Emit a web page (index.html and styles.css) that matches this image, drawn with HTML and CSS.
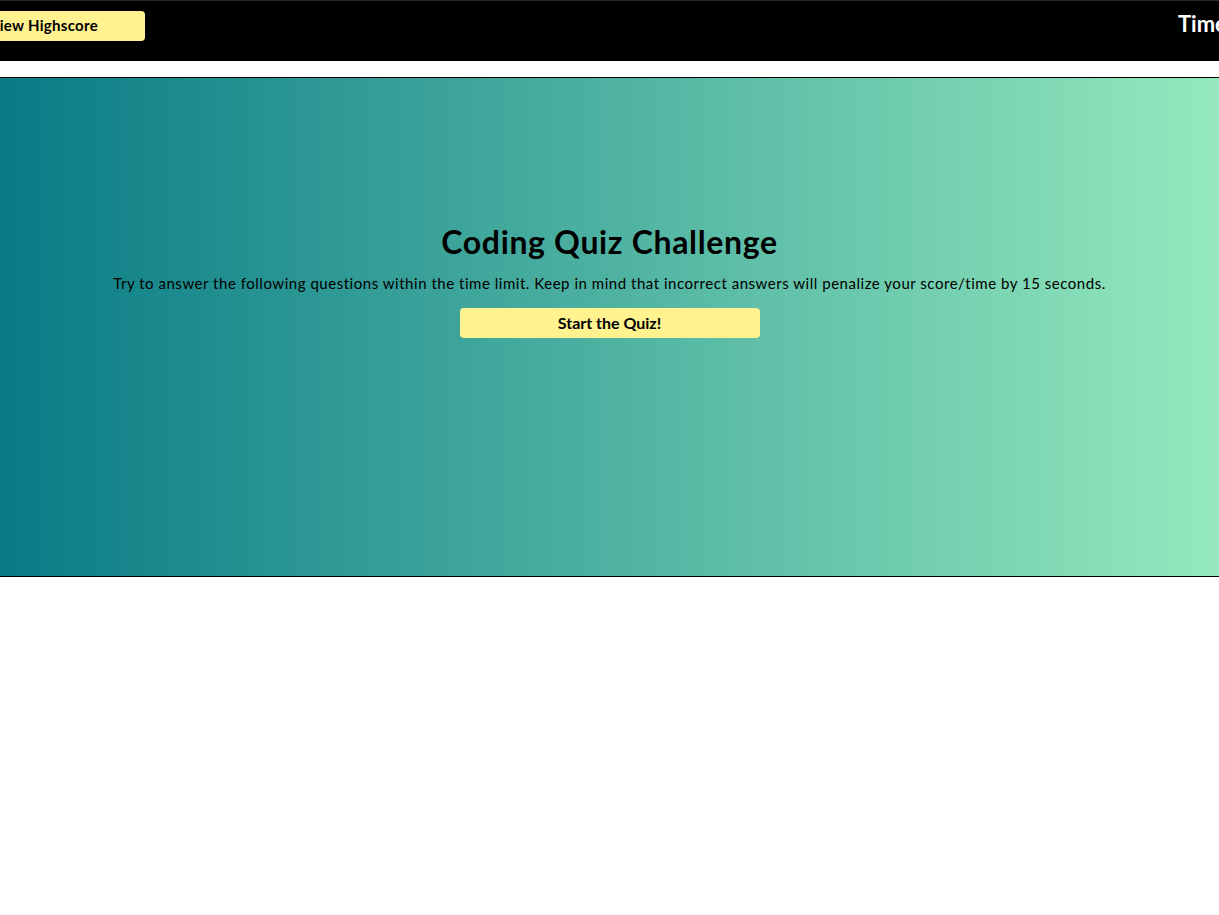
FILE: index.html
```html
<!DOCTYPE html>
<html lang="en">
<head>
<meta charset="utf-8">
<title>Coding Quiz Challenge</title>
<link rel="stylesheet" href="styles.css">
</head>
<body>
<header class="topbar">
  <button class="highscore-btn">View Highscore</button>
  <div class="timer">Time: 75</div>
</header>
<main class="quiz">
  <h1 class="quiz-title">Coding Quiz Challenge</h1>
  <p class="quiz-intro">Try to answer the following questions within the time limit. Keep in mind that incorrect answers will penalize your score/time by 15 seconds.</p>
  <button class="start-btn">Start the Quiz!</button>
</main>
</body>
</html>
```

FILE: styles.css
```css
html, body {
  margin: 0;
  padding: 0;
  overflow: hidden;
  background: #ffffff;
  font-family: "Lato", "Open Sans", sans-serif;
}

.topbar {
  display: flex;
  justify-content: space-between;
  align-items: flex-start;
  height: 60px;
  background: #000000;
  border-top: 1px solid #2a2a2a;
  overflow: hidden;
}

.highscore-btn {
  margin: 10px 0 0 -58px;
  width: 203px;
  height: 30px;
  border: none;
  border-radius: 4px;
  background: #fff28f;
  color: #000;
  font-family: inherit;
  font-weight: 700;
  font-size: 15px;
  letter-spacing: 0.3px;
  padding: 0 0 2px;
  cursor: pointer;
}

.timer {
  margin: 9px -40px 0 0;
  width: 81px;
  color: #ffffff;
  font-weight: 700;
  font-size: 22px;
  white-space: nowrap;
}

.quiz {
  margin-top: 16px;
  height: 498px;
  box-sizing: content-box;
  border-top: 1px solid #000;
  border-bottom: 1px solid #000;
  background: linear-gradient(to right, #087b86, #95e9bd);
  display: flex;
  flex-direction: column;
  align-items: center;
}

.quiz-title {
  margin: 144px 0 0;
  font-size: 32px;
  line-height: 40px;
  font-weight: 700;
  letter-spacing: 0.65px;
  color: #000;
}

.quiz-intro {
  margin: 11px 0 0;
  font-size: 15px;
  line-height: 20px;
  letter-spacing: 0.53px;
  color: #000;
}

.start-btn {
  margin-top: 15px;
  width: 300px;
  height: 30px;
  border: none;
  border-radius: 4px;
  background: #fff28f;
  color: #000;
  font-family: inherit;
  font-weight: 700;
  font-size: 16px;
  padding: 0 0 2px;
  cursor: pointer;
}
```
